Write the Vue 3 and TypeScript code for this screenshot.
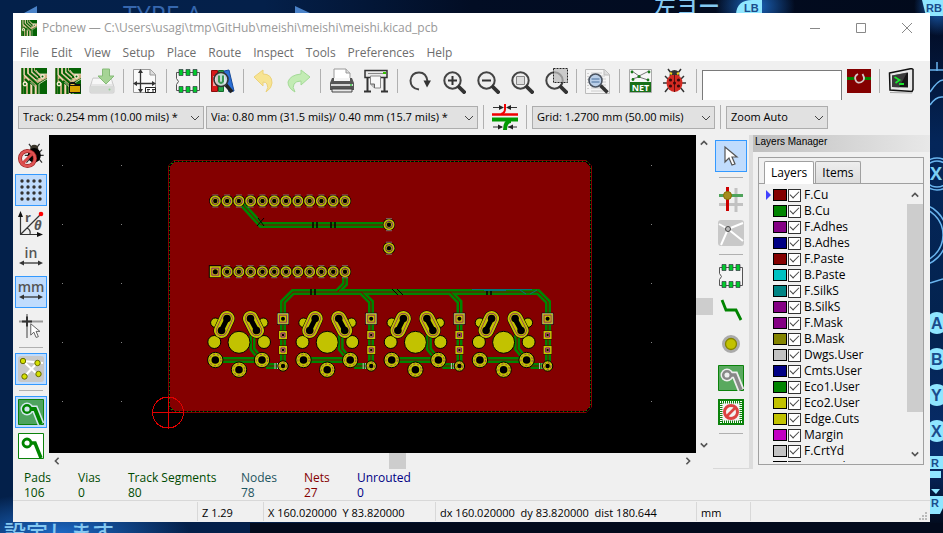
<script setup lang="ts">
import { ref } from 'vue'

interface Layer {
  name: string
  color: string
  visible: boolean
}

const menus = ['File', 'Edit', 'View', 'Setup', 'Place', 'Route', 'Inspect', 'Tools', 'Preferences', 'Help']

const layers = ref<Layer[]>([
  { name: 'F.Cu', color: '#840000', visible: true },
  { name: 'B.Cu', color: '#008400', visible: true },
  { name: 'F.Adhes', color: '#840084', visible: true },
  { name: 'B.Adhes', color: '#000084', visible: true },
  { name: 'F.Paste', color: '#840000', visible: true },
  { name: 'B.Paste', color: '#00c2c2', visible: true },
  { name: 'F.SilkS', color: '#008484', visible: true },
  { name: 'B.SilkS', color: '#840084', visible: true },
  { name: 'F.Mask', color: '#840084', visible: true },
  { name: 'B.Mask', color: '#848400', visible: true },
  { name: 'Dwgs.User', color: '#c2c2c2', visible: true },
  { name: 'Cmts.User', color: '#000084', visible: true },
  { name: 'Eco1.User', color: '#008400', visible: true },
  { name: 'Eco2.User', color: '#c2c200', visible: true },
  { name: 'Edge.Cuts', color: '#c2c200', visible: true },
  { name: 'Margin', color: '#c200c2', visible: true },
  { name: 'F.CrtYd', color: '#c2c2c2', visible: true },
  { name: 'B.CrtYd', color: '#848484', visible: true },
])
const activeLayer = ref('F.Cu')
const filter = ref('')

const stats = [
  { label: 'Pads', value: '106', tone: 'green', width: 54 },
  { label: 'Vias', value: '0', tone: 'green', width: 50 },
  { label: 'Track Segments', value: '80', tone: 'green', width: 113 },
  { label: 'Nodes', value: '78', tone: 'teal', width: 63 },
  { label: 'Nets', value: '27', tone: 'red', width: 53 },
  { label: 'Unrouted', value: '0', tone: 'blue', width: 80 },
]

const pinXs = Array.from({ length: 12 }, (_, i) => 215.3 + i * 11.79)
const pins = [
  ...pinXs.map((x) => ({ x, y: 201 })),
  ...pinXs.slice(1).map((x) => ({ x, y: 271.7 })),
  { x: 389, y: 224.7 },
  { x: 389, y: 248.2 },
]
const keys = [0, 88.2, 176.4, 264.6]
const gridDots = [62, 121, 651].flatMap((x) => [165, 224, 283, 342, 401].map((y) => ({ x, y })))
const ringPads = [
  { x: 215.3, y: 360 },
  { x: 262, y: 360 },
  { x: 239, y: 369.7 },
]
const matrixDots = [0, 1, 2, 3].flatMap((r) => [0, 1, 2, 3].map((c) => ({ x: 4 + c * 6, y: 4 + r * 6 })))
</script>

<template>
  <div class="desktop">
    <svg class="wallpaper" viewBox="0 0 943 533" preserveAspectRatio="none" aria-hidden="true">
      <defs>
        <linearGradient id="night" x1="0" x2="1">
          <stop offset="0" stop-color="#03204a" />
          <stop offset=".28" stop-color="#04204a" />
          <stop offset=".5" stop-color="#020d24" />
          <stop offset="1" stop-color="#020a1c" />
        </linearGradient>
        <linearGradient id="side" x1="0" x2="0" y1="0" y2="1">
          <stop offset="0" stop-color="#020a20" />
          <stop offset=".25" stop-color="#04265a" />
          <stop offset=".6" stop-color="#03234f" />
          <stop offset=".85" stop-color="#082d6c" />
          <stop offset="1" stop-color="#010714" />
        </linearGradient>
        <radialGradient id="glow">
          <stop offset="0" stop-color="#1c68c4" />
          <stop offset="1" stop-color="#1c68c4" stop-opacity="0" />
        </radialGradient>
      </defs>
      <rect width="943" height="533" fill="url(#night)" />
      <rect x="925" y="13" width="18" height="520" fill="url(#side)" />
      <rect y="523" x="250" width="693" height="10" fill="#020a1c" />
      <ellipse cx="60" cy="533" rx="130" ry="40" fill="url(#glow)" />
      <ellipse cx="755" cy="6" rx="40" ry="30" fill="url(#glow)" />
      <ellipse cx="938" cy="6" rx="24" ry="30" fill="url(#glow)" />
      <path d="M37 6v7H24z M295 6v7h15z" fill="#4a82c8" />
      <text x="123" y="24" class="wall-title">TYPE A</text>
      <text x="654" y="14" class="wall-jp">左ヨー</text>
      <text x="-18" y="541" class="wall-jp">し設定します</text>
      <path d="M736 14q1-14 16-14h10v14z M922 0h21v16h-17z" fill="#8fe6ff" />
      <text x="744" y="12" class="wall-pad small">LB</text>
      <text x="926" y="12" class="wall-pad small">RB</text>
      <g fill="none" stroke="#69b4ee" stroke-width="1.5">
        <circle cx="937" cy="174" r="16" />
        <circle cx="937" cy="174" r="13" />
        <circle cx="915" cy="235" r="28" />
        <circle cx="915" cy="235" r="32" />
        <path d="M930 70h13M937 62v9M930 92q8-12 13-12M930 105q6-9 13-8M930 283l13-4" />
      </g>
      <g fill="#8fe6ff">
        <circle cx="937" cy="323" r="11" />
        <circle cx="937" cy="359" r="11" />
        <circle cx="937" cy="395" r="11" />
        <circle cx="937" cy="431" r="11" />
        <path d="M930 456h13v13h-13z M930 471h11v7h-11z M931 489h9l-4 5z M930 496h13v12l-3 6h-10z" />
      </g>
      <text x="930" y="180" font-size="18" font-weight="700" fill="#7bd0f5">X</text>
      <text x="931" y="329" class="wall-pad">A</text>
      <text x="931" y="365" class="wall-pad">B</text>
      <text x="931" y="401" class="wall-pad">Y</text>
      <text x="931" y="437" class="wall-pad">X</text>
      <text x="931" y="467" class="wall-pad small">R</text>
      <text x="931" y="507" class="wall-pad small">R</text>
    </svg>

    <main class="window">
      <header class="titlebar">
        <svg class="app-icon" viewBox="0 0 26 26"><use href="#pcb" /></svg>
        <h1>Pcbnew — C:\Users\usagi\tmp\GitHub\meishi\meishi\meishi.kicad_pcb</h1>
        <div class="window-buttons">
          <button aria-label="Minimize"><svg viewBox="0 0 12 12"><path d="M1 6.500h10" /></svg></button>
          <button aria-label="Maximize"><svg viewBox="0 0 12 12"><path d="M1.500 1.500h9v9h-9z" /></svg></button>
          <button aria-label="Close"><svg viewBox="0 0 12 12"><path d="M1 1l10 10M11 1L1 11" /></svg></button>
        </div>
      </header>

      <nav class="menubar">
        <button v-for="m in menus" :key="m">{{ m }}</button>
      </nav>

      <svg class="defs" aria-hidden="true">
        <defs>
          <g id="pcb">
            <path fill="#d0b183" d="M0 0h26v26H0z" />
            <path fill="#056305" d="M14 0h12v6h-7l-5-4zM17 15l9-5v16h-9z" />
            <g fill="none" stroke="#056305" stroke-width="2.200">
              <path d="M1.500 0v26M5 0v6l12 11v9M9 0v5l8 7M12 0v3l6 6h3M4 17v9M8 26V15L4 11M12.500 26V17L8 13" />
            </g>
            <g fill="none" stroke="#f4ead0" stroke-width=".8">
              <path d="M3 0v7l5 5M7 0v5l8 7h5M11 0v4l6 5M10.500 26V17M14.500 26v-7l-5-5M15 2l3 4h8M18 26V16l8-5" />
            </g>
            <circle cx="21.500" cy="8.500" r="2.400" fill="#f4ead0" /><circle cx="21.500" cy="8.500" r="1" fill="#056305" />
            <circle cx="4" cy="16" r="2.400" fill="#f4ead0" /><circle cx="4" cy="16" r="1" fill="#056305" />
          </g>
          <g id="chip">
            <path d="M1.500 4.500h23v18h-23v-6l2-3-2-3z" fill="#f4f4f4" stroke="#555" />
            <g fill="#00cb2c" stroke="#334" stroke-width=".7">
              <path d="M4 1.500h4v6H4zM11 1.500h4v6h-4zM18 1.500h4v6h-4zM4 18.500h4v6H4zM11 18.500h4v6h-4zM18 18.500h4v6h-4z" />
            </g>
          </g>
          <g id="lens">
            <circle cx="12.500" cy="12.500" r="8.200" fill="#eee" stroke="#444" stroke-width="2" />
            <path d="M19 19l5 5" stroke="#333" stroke-width="3.800" stroke-linecap="square" />
          </g>
          <g id="bug">
            <path d="M6 1l3 4M19 1l-3 4M3 8l4 4M22 8l-4 4M1 15h5M24 15h-5M3 24l4-5M22 24l-4-5" fill="none" stroke="#333" stroke-width="1.500" />
            <path d="M7.500 8q0-6 5-6t5 6z" fill="#3a352a" />
            <ellipse cx="12.500" cy="15" rx="8" ry="9" />
          </g>
          <g id="pointer">
            <path d="M1 1v15l4-4 3 7 3-1-3-7h5z" fill="#fff" stroke="#555" stroke-width="1.200" />
          </g>
        </defs>
      </svg>

      <section class="toolbar main-tools" aria-label="Main tools">
        <button class="tool" aria-label="New board"><svg viewBox="0 0 26 26"><use href="#pcb" /></svg></button>
        <button class="tool" aria-label="Open board">
          <svg viewBox="0 0 26 26">
            <use href="#pcb" />
            <path d="M14 25V15.500l2-1.500h4l1 2h4.500v9z" fill="#111" />
            <path d="M15 24v-6h10v6z" fill="#d9a400" /><path d="M15.500 17v-1h4v1z" fill="#e9c33a" />
          </svg>
        </button>
        <button class="tool" aria-label="Save">
          <svg viewBox="0 0 26 26">
            <path d="M4 10h18l3 9v5q0 1-1 1H2q-1 0-1-1v-5z" fill="#e6e6e6" stroke="#ccc" />
            <path d="M2 18h22v6H2z" fill="#d8dad8" /><path d="M4 11h18l1 5H3z" fill="#f7f7f7" />
            <path d="M13.500 1h7v7H25l-8 8-8-8h4.500z" fill="#a5d495" stroke="#86bb78" /><circle cx="20.500" cy="21.500" r="1" fill="#8ed08e" />
          </svg>
        </button>
        <span class="sep"></span>
        <button class="tool" aria-label="Page settings">
          <svg viewBox="0 0 26 26">
            <path d="M1.500 1.500h17l5 5v18h-22z" fill="#fafafa" stroke="#999" /><path d="M18 1.500V7h5.500" fill="#ddd" stroke="#999" />
            <g stroke="#333" stroke-width="1.300"><path d="M8.500 3v20M3 15.500h19" /></g>
            <path d="M8.500 1l-2.500 4h5zM8.500 25l-2.500-4h5zM1 15.500l4-2.500v5zM24 15.500L20 13v5z" fill="#333" />
            <path d="M13.500 19.500h10v5h-10z" fill="#fff" stroke="#222" /><path d="M15 21.500h3M15 23h2M20 21.500h3M20 23h2" stroke="#333" />
          </svg>
        </button>
        <span class="sep"></span>
        <button class="tool" aria-label="Footprint editor"><svg viewBox="0 0 26 26"><use href="#chip" /></svg></button>
        <button class="tool" aria-label="Footprint viewer">
          <svg viewBox="0 0 26 26">
            <path d="M2.500 2.500h6v21h-6z" fill="#d71919" stroke="#8d0d0d" /><path d="M9.500 2.500h5v21h-5z" fill="#28a44a" stroke="#126b2a" />
            <path d="M15 3l5-1 5 21-5 1z" fill="#2b6fd6" stroke="#174a9a" /><path d="M4 8h3v10H4z" fill="#fff" opacity=".6" />
            <circle cx="12" cy="11.500" r="7" fill="#dce6ea" fill-opacity=".85" stroke="#333" stroke-width="1.600" />
            <path d="M10 7.500v6q2 3 4 0v-6" fill="none" stroke="#3a9a55" stroke-width="2" />
            <path d="M17 17l6 7" stroke="#222" stroke-width="3.600" />
          </svg>
        </button>
        <span class="sep"></span>
        <button class="tool" aria-label="Undo">
          <svg viewBox="0 0 26 26"><path d="M2 9l9-7v4q9 0 9 9 0 5-6 9 3-5 1-8-1-2-4-2v4z" fill="#f7e493" stroke="#ecd27a" /></svg>
        </button>
        <button class="tool" aria-label="Redo">
          <svg viewBox="0 0 26 26"><path d="M24 9l-9-7v4Q4 7 2 14q0 6 7 10-3-5-1-8 2-3 7-3v4z" fill="#c3ecb4" stroke="#a3da96" /></svg>
        </button>
        <span class="sep"></span>
        <button class="tool" aria-label="Print">
          <svg viewBox="0 0 26 26">
            <path d="M5 13V1h12l4 4v8z" fill="#fff" stroke="#999" /><path d="M17 1v4h4" fill="#ddd" stroke="#999" />
            <path d="M3 10h20l2 5v7H1v-7z" fill="#555" /><path d="M5 10h16v3H5z" fill="#f5f5f5" />
            <path d="M2 16h22v2H2z" fill="#d5d5d5" /><path d="M3 21h20v3H3z" fill="#e8e8e8" stroke="#444" /><circle cx="22" cy="17" r="1" fill="#35c23f" />
          </svg>
        </button>
        <button class="tool" aria-label="Plot">
          <svg viewBox="0 0 26 26">
            <path d="M2 2.500h22v7H2z" fill="#e9e9e9" stroke="#333" stroke-width="1.500" /><path d="M5 5.500h15" stroke="#888" /><path d="M20 4h3v2h-3z" fill="#35c200" />
            <path d="M4.500 9v14M21.500 9v14M1 23.500h7M18 23.500h7" stroke="#333" stroke-width="2" />
            <path d="M7.500 8h10v12h-6l-4-4z" fill="#f8f8f8" stroke="#888" /><path d="M7.500 16h4v4" fill="#bbb" stroke="#666" />
          </svg>
        </button>
        <span class="sep"></span>
        <button class="tool" aria-label="Redraw">
          <svg viewBox="0 0 26 26"><path d="M13 21.500q-8.500-1-8.500-9 1-8 8.500-8t8.500 9" fill="none" stroke="#444" stroke-width="2" /><path d="M17.500 12.500h7.500l-4 7z" fill="#333" /></svg>
        </button>
        <button class="tool" aria-label="Zoom in"><svg viewBox="0 0 26 26"><use href="#lens" /><path d="M8 12.500h9M12.500 8v9" stroke="#333" stroke-width="2" /></svg></button>
        <button class="tool" aria-label="Zoom out"><svg viewBox="0 0 26 26"><use href="#lens" /><path d="M8 12.500h9" stroke="#333" stroke-width="2" /></svg></button>
        <button class="tool" aria-label="Zoom to fit"><svg viewBox="0 0 26 26"><use href="#lens" /><path d="M8.500 8.500h8v8h-8z" fill="#ddd" stroke="#888" /></svg></button>
        <button class="tool" aria-label="Zoom to selection">
          <svg viewBox="0 0 26 26"><use href="#lens" /><path d="M11.500.500h14v14h-14z" fill="#bbb" fill-opacity=".7" stroke="#222" stroke-dasharray="2 1" /></svg>
        </button>
        <span class="sep"></span>
        <button class="tool" aria-label="Find">
          <svg viewBox="0 0 26 26">
            <path d="M.5 1.500h19l5 5v19H.5z" fill="#f5f5f5" stroke="#bbb" /><path d="M19 1.500V7h5.500" fill="#ddd" stroke="#bbb" />
            <path d="M6 5h11M6 8h14M6 11h15M6 14h15M6 17h15M6 20h15M6 23h15" stroke="#ccc" /><path d="M3 5v18" stroke="#aaa" stroke-dasharray="1 2" />
            <circle cx="10.500" cy="12.500" r="6.500" fill="#bacfe8" stroke="#4a5360" stroke-width="1.600" /><path d="M6.500 11h8M6.500 14h8" stroke="#6e8fb5" stroke-width="1.500" />
            <path d="M15.500 17.500l7 7" stroke="#333" stroke-width="3.600" />
          </svg>
        </button>
        <span class="sep"></span>
        <button class="tool" aria-label="Netlist">
          <svg viewBox="0 0 26 26">
            <path d="M1.500 1.500h22v23h-22z" fill="#f7f7f7" stroke="#aaa" /><path d="M4 3l7 5 10-5M4 11l7-2 9 3" fill="none" stroke="#777" />
            <g fill="#187818"><circle cx="4" cy="4" r="1.400" /><circle cx="21" cy="4" r="1.400" /><circle cx="11" cy="8.500" r="1.600" /><circle cx="5" cy="11.500" r="1.400" /><circle cx="20" cy="12" r="1.400" /></g>
            <path d="M2 14h21v10H2z" fill="#187018" /><text x="12.500" y="23" class="net-text">NET</text>
          </svg>
        </button>
        <button class="tool" aria-label="Design rules check">
          <svg viewBox="0 0 26 26">
            <use href="#bug" fill="#d32a22" /><path d="M8 7q0-4 4.500-4T17 7z" fill="#333" /><path d="M8 5l2 1M17 5l-2 1" stroke="#f2d21c" stroke-width="2" /><path d="M12.500 7v17" stroke="#611" />
            <g fill="#3a0a0a"><circle cx="8.500" cy="12" r="1.600" /><circle cx="16.500" cy="12" r="1.600" /><circle cx="8.500" cy="18" r="1.600" /><circle cx="16.500" cy="18" r="1.600" /><circle cx="12.500" cy="15" r="1.500" /></g>
          </svg>
        </button>
        <span class="sep"></span>
        <input v-model="filter" class="filter" aria-label="Layer selection" />
        <button class="tool layer-pair" aria-label="Select layer pair">
          <svg viewBox="0 0 26 26"><path d="M1 1h24v24H1z" fill="#840000" /><path d="M1 10.500h24" stroke="#008400" stroke-width="3" /><circle cx="13" cy="10.500" r="5" fill="#840000" /><path d="M12 6q-4 2-2.500 6t6 2 1-8" fill="none" stroke="#d5c9c9" stroke-width="1.800" /></svg>
        </button>
        <span class="sep"></span>
        <button class="tool" aria-label="Scripting console">
          <svg viewBox="0 0 26 26">
            <path d="M1.500 5l22-4.500 1.500 1v20l-1 2L2 22z" fill="#e8e8e8" stroke="#111" stroke-width="1.500" /><path d="M4 7.500L20 4.500v15L4 19z" fill="#161616" />
            <path d="M4 7.500l15-3-8 15-7-.5z" fill="#555" opacity=".6" /><path d="M6.500 9l5 3-4 3M11 16h5" fill="none" stroke="#19e52c" stroke-width="1.800" /><path d="M2 24.500l22 .5" stroke="#aaa" />
          </svg>
        </button>
      </section>

      <section class="toolbar option-tools" aria-label="Options">
        <label class="choice track"><select aria-label="Track width"><option>Track: 0.254 mm (10.00 mils) *</option></select><svg viewBox="0 0 10 6"><path d="M1 1l4 4 4-4" /></svg></label>
        <label class="choice via"><select aria-label="Via size"><option>Via: 0.80 mm (31.5 mils)/ 0.40 mm (15.7 mils) *</option></select><svg viewBox="0 0 10 6"><path d="M1 1l4 4 4-4" /></svg></label>
        <span class="sep"></span>
        <button class="tool" aria-label="Automatic track width">
          <svg viewBox="0 0 26 26">
            <path d="M0 10.500h26" stroke="#f00000" stroke-width="2.500" /><path d="M0 15.500h26" stroke="#009a00" stroke-width="4" />
            <path d="M13 0v5q0 4-4 5" fill="none" stroke="#f00000" stroke-width="2" /><path d="M19 17q-6 0-6 9" fill="none" stroke="#009a00" stroke-width="4" />
            <path d="M1 3.500h9M25 3.500h-9M1 23h9M25 23h-9" stroke="#333" /><path d="M7 1l5 2.500L7 6zM19 1l-5 2.500L19 6zM6 20.500l5 2.500-5 2.500zM21 20.500L16 23l5 2.500z" fill="#222" />
          </svg>
        </button>
        <span class="sep"></span>
        <label class="choice grid"><select aria-label="Grid"><option>Grid: 1.2700 mm (50.00 mils)</option></select><svg viewBox="0 0 10 6"><path d="M1 1l4 4 4-4" /></svg></label>
        <span class="sep"></span>
        <label class="choice zoom"><select aria-label="Zoom"><option>Zoom Auto</option></select><svg viewBox="0 0 10 6"><path d="M1 1l4 4 4-4" /></svg></label>
      </section>

      <div class="workspace">
        <aside class="side-tools left-tools" aria-label="Display options">
          <button class="tool" aria-label="Disable DRC">
            <svg viewBox="0 0 26 26"><g transform="translate(6 0) scale(.82)"><use href="#bug" fill="#000" /></g><circle cx="9.500" cy="15.500" r="7.500" fill="none" stroke="#9a2020" stroke-width="4" /><circle cx="9.500" cy="15.500" r="7.500" fill="none" stroke="#e05555" stroke-width="2.600" /><path d="M4.500 20.500l10-10" stroke="#d94848" stroke-width="3" /></svg>
          </button>
          <button class="tool on" aria-label="Show grid">
            <svg viewBox="0 0 26 26"><circle v-for="(d, i) in matrixDots" :key="i" :cx="d.x" :cy="d.y" r="1.700" fill="#333" /></svg>
          </button>
          <button class="tool" aria-label="Polar coordinates">
            <svg viewBox="0 0 26 26"><path d="M2.500 23.500V4M2 23.500h20M3 23L22 4M9 17q4 2 3 6" fill="none" stroke="#333" stroke-width="1.200" /><path d="M2.500 0L0 6h5zM25 23.500L19 21v5z" fill="#111" /><circle cx="23" cy="3" r="2.300" fill="#f00" /><text x="7" y="11" class="glyph">r</text><text x="16" y="19" class="glyph theta">θ</text></svg>
          </button>
          <button class="tool" aria-label="Inches"><svg viewBox="0 0 26 26"><text x="13" y="13" class="unit">in</text><path d="M4 18h18" stroke="#333" stroke-width="1.300" /><path d="M1 18l5-2.500v5zM25 18l-5-2.500v5z" fill="#333" /></svg></button>
          <button class="tool on" aria-label="Millimeters"><svg viewBox="0 0 26 26"><text x="13" y="13" class="unit">mm</text><path d="M4 18h18" stroke="#333" stroke-width="1.300" /><path d="M1 18l5-2.500v5zM25 18l-5-2.500v5z" fill="#333" /></svg></button>
          <button class="tool" aria-label="Cursor shape">
            <svg viewBox="0 0 26 26"><path d="M9 1v24M1 8.500h24" stroke="#999" stroke-width="2" /><path d="M9 3.500v10M4 8.500h10" stroke="#333" stroke-width="2" /><g transform="translate(12 10) scale(.76)"><use href="#pointer" /></g></svg>
          </button>
          <span class="sep"></span>
          <button class="tool on" aria-label="Ratsnest">
            <svg viewBox="0 0 26 26"><rect width="26" height="26" rx="3" fill="#c8c8c8" /><path d="M5 5l15 14M6 21L19 7M5 5l20 2" stroke="#fff" stroke-width="2.200" /><g fill="#d5e000" stroke="#666b00"><circle cx="5" cy="5" r="2.700" /><circle cx="19.500" cy="7" r="2.700" /><circle cx="6.500" cy="20.500" r="2.700" /><circle cx="20.500" cy="18" r="2.700" /></g></svg>
          </button>
          <span class="sep"></span>
          <button class="tool on" aria-label="Filled zones">
            <svg viewBox="0 0 26 26"><path d="M.5.5h25v25H.5z" fill="#4ea35f" stroke="#0b820b" /><path d="M9 10h8l6 15" fill="none" stroke="#d3e7ee" stroke-width="7" /><circle cx="9" cy="10" r="6.500" fill="#d3e7ee" /><path d="M9 10h8l6 15" fill="none" stroke="#008400" stroke-width="3.800" /><circle cx="9" cy="10" r="3.800" fill="#d3e7ee" stroke="#008400" stroke-width="2.400" /></svg>
          </button>
          <button class="tool" aria-label="Outline zones">
            <svg viewBox="0 0 26 26"><path d="M.5.5h25v25H.5z" fill="#fff" stroke="#0b820b" /><path d="M12 10h5l6 15" fill="none" stroke="#008400" stroke-width="3.400" /><circle cx="9" cy="10" r="4" fill="#fff" stroke="#008400" stroke-width="2.800" /></svg>
          </button>
        </aside>

        <div class="view">
          <div class="view-row">
            <svg class="board" viewBox="49 135 647 318" role="img" aria-label="Board">
              <rect v-for="(d, i) in gridDots" :key="'g' + i" :x="d.x" :y="d.y" width="1" height="1" fill="#848484" />
              <path d="M174 160H586L592 166V407L586 413H174L168 407V166z" fill="#840000" />
              <path d="M174 161.500H586L590.500 166V407L586 411.500H174L169.500 407V166z" fill="none" stroke="#000" shape-rendering="crispEdges" />
              <path d="M174 161.500H586L590.500 166V407L586 411.500H174L169.500 407V166z" fill="none" stroke="#008400" stroke-dasharray="1 3" shape-rendering="crispEdges" />

              <g v-for="pass in ['wide', 'core']" :key="pass" :class="['trace', pass]">
                <path d="M241 203l20 22h123M345 275v9l-8 8M283 368v-66l10-10h245l10 10v64" />
                <path d="M361 292l10 10v64M450 292l9.500 10v64" />
                <g v-for="k in keys" :key="k" :transform="`translate(${k} 0)`">
                  <path d="M221 360h34M252.500 335v14l8 10M266 366h14" />
                </g>
              </g>
              <g stroke="#000" stroke-width="1.500">
                <path d="M313 222v6M317 222v6M331 222v6M335 222v6M311 289v6M315 289v6M487 291v4M491 291v4" />
                <path d="M258 218l6 8M264 218l-7 8M392 289l6 6M397 289l6 6" stroke-width="1" />
              </g>
              <path d="M472 289.500h60M484 290.500h22M520 290l6 4M530 294l7-4" stroke="#007878" />

              <g v-for="(p, i) in pins" :key="'p' + i" :transform="`translate(${p.x} ${p.y})`">
                <circle r="6.200" fill="#000" />
                <path d="M-3-6h6M-3 6h6" stroke="#848484" stroke-width=".8" />
                <circle r="5.500" fill="#c2c200" />
                <circle r="3.500" fill="none" stroke="#3c0a3c" stroke-width=".8" /><circle r="3.700" fill="none" stroke="#a03aa0" stroke-width=".8" stroke-dasharray="2 3" />
                <circle r="2.200" fill="#000" />
              </g>
              <g transform="translate(215.300 271.700)">
                <path d="M-6.500-6.500H6V6H-6.500z" fill="#000" /><path d="M-5.500-5.500H5.500V5.500H-5.500z" fill="#c2c200" /><path d="M-3.500-3.500h7v7h-7z" fill="none" stroke="#840084" stroke-width=".8" /><circle r="2.500" />
              </g>

              <g v-for="k in keys" :key="'k' + k" :transform="`translate(${k} 0)`">
                <g fill="#c2c200" stroke="#000">
                  <circle cx="215.300" cy="322.700" r="4.700" /><circle cx="263.300" cy="322.700" r="4.700" />
                  <circle cx="239" cy="342.300" r="11" /><circle cx="214.300" cy="342" r="6.500" /><circle cx="264" cy="342" r="6.500" />
                </g>
                <g fill="none" stroke-linecap="round">
                  <path class="slot-edge" d="M227 318.500l-5.500 12M250.500 318.500l6 12" />
                  <path class="slot-pad" d="M227 318.500l-5.500 12M250.500 318.500l6 12" />
                  <path class="slot-mask" d="M227 318.500l-5.500 12M250.500 318.500l6 12" />
                  <path class="slot-ring" d="M227 318.500l-5.500 12M250.500 318.500l6 12" />
                  <path class="slot-hole" d="M227 319l-5.500 11M250.500 319l6 11" />
                </g>
                <g fill="#000"><circle cx="227" cy="318.500" r="3.800" /><circle cx="221.500" cy="330.500" r="3.800" /><circle cx="250.500" cy="318.500" r="3.800" /><circle cx="256.500" cy="330.500" r="3.800" /></g>
                <g v-for="(p, i) in ringPads" :key="i" :transform="`translate(${p.x} ${p.y})`">
                  <circle r="7.700" fill="#c2c200" stroke="#000" /><circle r="5.700" fill="none" stroke="#840084" stroke-width=".7" stroke-dasharray="2 2" /><circle r="3.800" fill="#000" />
                </g>
                <g transform="translate(283 318.700)"><path d="M-6-6H6V6H-6z" fill="#000" /><path d="M-5.200-5.200H5.200V5.200H-5.200z" fill="#c2c200" stroke="#c2c2c2" stroke-width=".5" /><path d="M-3.500-3.500h7v7h-7z" fill="none" stroke="#840084" stroke-width=".7" /><circle r="2" fill="#000" /></g>
                <g v-for="y in [335, 350]" :key="y" :transform="`translate(283 ${y})`"><path d="M-4.500-4.500h9v9h-9z" fill="#420000" /><path d="M-4-4h8v8h-8z" fill="#c2c200" /><path d="M-2-2h4v4h-4z" fill="#c2c200" stroke="#840084" /><path d="M-1-1h2v2h-2z" /></g>
                <path d="M275 363v6M277.500 363v6" stroke="#c2c2c2" />
                <g transform="translate(283 366)"><circle r="5.200" fill="#c2c200" stroke="#000" /><circle r="3.400" fill="none" stroke="#840084" stroke-width=".7" stroke-dasharray="2 2" /><circle r="2.200" /></g>
              </g>
              <g fill="none" stroke="#e00000" shape-rendering="crispEdges"><circle cx="168" cy="412.500" r="15.500" /><path d="M152 412.500h32M168.500 396v33" /></g>
            </svg>
            <div class="scroll vertical">
              <button aria-label="Scroll up"><svg viewBox="0 0 10 6"><path d="M1 5l4-4 4 4" /></svg></button>
              <span class="thumb"></span>
              <button aria-label="Scroll down"><svg viewBox="0 0 10 6"><path d="M1 1l4 4 4-4" /></svg></button>
            </div>
          </div>
          <div class="scroll horizontal">
            <button aria-label="Scroll left"><svg viewBox="0 0 6 10"><path d="M5 1L1 5l4 4" /></svg></button>
            <span class="thumb"></span>
            <button aria-label="Scroll right"><svg viewBox="0 0 6 10"><path d="M1 1l4 4-4 4" /></svg></button>
          </div>
        </div>

        <aside class="side-tools right-tools" aria-label="Drawing tools">
          <button class="tool on" aria-label="Select"><svg viewBox="0 0 26 26"><g transform="translate(6 3)"><use href="#pointer" /></g></svg></button>
          <span class="sep"></span>
          <button class="tool" aria-label="Highlight net">
            <svg viewBox="0 0 26 26"><path d="M18 2v24M1 18.500h24" stroke="#c2c2c2" stroke-width="3" /><path d="M9.500 1v24" stroke="#cc0000" stroke-width="3" /><path d="M1 9.500h24" stroke="#4ea35a" stroke-width="3" /><circle cx="9.500" cy="9.500" r="4" fill="#a58d1c" stroke="#857000" /></svg>
          </button>
          <button class="tool" aria-label="Local ratsnest">
            <svg viewBox="0 0 26 26"><rect width="26" height="26" rx="3" fill="#c8c8c8" /><path d="M10 9L1 4M10 9l15-6M10 9l15 12M10 9L3 25" stroke="#fff" stroke-width="2" /><circle cx="10" cy="9" r="2.500" fill="#bbb" stroke="#444" /></svg>
          </button>
          <span class="sep"></span>
          <button class="tool" aria-label="Add footprint"><svg viewBox="0 0 26 26"><use href="#chip" /></svg></button>
          <button class="tool" aria-label="Route track"><svg viewBox="0 0 26 26"><path d="M4 3l4 10h10l5 10" fill="none" stroke="#008400" stroke-width="2.800" /></svg></button>
          <button class="tool" aria-label="Add via"><svg viewBox="0 0 26 26"><circle cx="13" cy="13" r="7.500" fill="#aaa28b" stroke="#aaa" stroke-width="3" /><circle cx="13" cy="13" r="5.500" fill="#c2c200" stroke="#848400" stroke-width="1.300" /></svg></button>
          <button class="tool" aria-label="Add zone">
            <svg viewBox="0 0 26 26"><path d="M.5.5h25v25H.5z" fill="#59a95f" stroke="#0b820b" /><path d="M9 10h8l6 15" fill="none" stroke="#eee" stroke-width="7" /><circle cx="9" cy="10" r="6.500" fill="#eee" /><path d="M9 10h8l6 15" fill="none" stroke="#888" stroke-width="3.400" /><circle cx="9" cy="10" r="3.800" fill="#eee" stroke="#888" stroke-width="2.500" /></svg>
          </button>
          <button class="tool" aria-label="Add keepout">
            <svg viewBox="0 0 26 26"><path d="M1 1h24v24H1z" fill="#fff" stroke="#0b820b" stroke-width="2" /><path d="M3 3h20v20H3z" fill="#f2f2f2" stroke="#0b820b" stroke-width="3" stroke-dasharray="1 1" /><circle cx="13" cy="13" r="6.500" fill="#f2f2f2" stroke="#dc4242" stroke-width="3" /><path d="M8.500 17.500l9-9" stroke="#dc4242" stroke-width="2.600" /></svg>
          </button>
          <span class="sep"></span>
        </aside>

        <aside class="layers-pane">
          <h2>Layers Manager</h2>
          <div class="tab-box">
            <div class="tabs" role="tablist">
              <button role="tab" class="tab current">Layers</button>
              <button role="tab" class="tab">Items</button>
            </div>
            <div class="tab-body">
              <ul>
                <li v-for="l in layers" :key="l.name">
                  <span class="marker"><svg v-if="l.name === activeLayer" viewBox="0 0 5 10"><path d="M0 0l5 5-5 5z" /></svg></span>
                  <span class="swatch" :style="{ background: l.color }"></span>
                  <label><input v-model="l.visible" type="checkbox" />{{ l.name }}</label>
                </li>
              </ul>
              <div class="scroll vertical list-scroll">
                <button aria-label="Scroll layers up"><svg viewBox="0 0 10 6"><path d="M1 5l4-4 4 4" /></svg></button>
                <span class="thumb"></span>
                <button aria-label="Scroll layers down"><svg viewBox="0 0 10 6"><path d="M1 1l4 4 4-4" /></svg></button>
              </div>
            </div>
          </div>
        </aside>
      </div>

      <dl class="stats">
        <div v-for="s in stats" :key="s.label" :class="s.tone" :style="{ width: s.width + 'px' }">
          <dt>{{ s.label }}</dt>
          <dd>{{ s.value }}</dd>
        </div>
      </dl>

      <footer class="status">
        <span class="message"></span>
        <span class="zoom-level">Z 1.29</span>
        <span class="position">X 160.020000&nbsp; Y 83.820000</span>
        <span class="delta">dx 160.020000&nbsp; dy 83.820000&nbsp; dist 180.644</span>
        <span class="units">mm</span>
        <span class="rest"></span>
        <svg class="grip" viewBox="0 0 9 9"><path d="M6 0h2v2H6zM3 3h2v2H3zM6 3h2v2H6zM0 6h2v2H0zM3 6h2v2H3zM6 6h2v2H6z" /></svg>
      </footer>
    </main>
  </div>
</template>

<style>
body {
  background: #020d24;
}
</style>

<style scoped>
* {
  box-sizing: border-box;
}
.desktop {
  position: relative;
  display: flex;
  height: 100vh;
  padding: 13px 13px 11px;
  font-family: 'Open Sans', 'Noto Sans CJK JP', sans-serif;
  font-size: 12px;
  line-height: 16px;
  color: #000;
}
.wallpaper {
  position: absolute;
  inset: 0;
  width: 100%;
  height: 100%;
}
.wall-title {
  font-size: 25px;
  fill: #3667ae;
}
.wall-jp {
  font-family: 'Noto Sans CJK JP', sans-serif;
  font-size: 22px;
  font-weight: 500;
  fill: #85c9f2;
}
.wall-pad {
  font-family: 'Liberation Sans', sans-serif;
  font-weight: 700;
  font-size: 16px;
  fill: #1a4c8c;
}
.small {
  font-size: 11px;
}
.window {
  position: relative;
  flex: 1;
  min-width: 0;
  display: flex;
  flex-direction: column;
  background: #f0f0f0;
}
.defs {
  position: absolute;
  width: 0;
  height: 0;
}
button {
  font: inherit;
  color: inherit;
  background: none;
  border: 0;
  padding: 0;
}
svg {
  display: block;
}
.titlebar {
  display: flex;
  align-items: center;
  height: 30px;
  padding-left: 8px;
  background: #fff;
}
.app-icon {
  width: 16px;
  height: 16px;
  margin-right: 5px;
}
h1 {
  flex: 1;
  margin: 0;
  font-size: 12px;
  font-weight: 400;
  color: #999;
  white-space: nowrap;
}
.window-buttons {
  display: flex;
}
.window-buttons button {
  width: 46px;
  height: 28px;
  display: grid;
  place-items: center;
}
.window-buttons svg {
  width: 12px;
  height: 12px;
  fill: none;
  stroke: #888;
}
.menubar {
  display: flex;
  gap: 12px;
  height: 18px;
  padding: 2px 0 0 7px;
  background: #fff;
  color: #6d6d6d;
}
.menubar button {
  height: 16px;
}
.toolbar {
  display: flex;
  align-items: center;
}
.main-tools {
  height: 40px;
  padding-left: 4px;
}
.option-tools {
  height: 34px;
  padding: 0 0 2px 5px;
}
.tool {
  width: 34px;
  height: 34px;
  flex: none;
  display: grid;
  place-items: center;
}
.tool svg {
  width: 26px;
  height: 26px;
}
.toolbar .sep {
  width: 9px;
  height: 24px;
  flex: none;
  background: linear-gradient(#b0b0b0, #b0b0b0) 4px 0 / 1px 100% no-repeat;
}
.option-tools .sep {
  width: 11px;
  background-position: 5px 0;
}
.option-tools .tool {
  width: 32px;
}
.filter {
  width: 140px;
  height: 30px;
  margin: 7px 0 0 1px;
  border: 1px solid #7a7a7a;
  border-bottom: 0;
  background: #fff;
}
.layer-pair {
  margin-right: -1px;
}
.net-text {
  font-size: 9px;
  font-weight: 700;
  fill: #fff;
  text-anchor: middle;
}
.choice {
  position: relative;
  flex: none;
}
.choice select {
  appearance: none;
  width: 100%;
  height: 23px;
  padding: 0 16px 0 4px;
  border: 1px solid #adadad;
  border-radius: 0;
  background: #e1e1e1;
  font: inherit;
  font-size: 11px;
  color: #000;
  display: block;
}
.choice svg {
  position: absolute;
  right: 4px;
  top: 9px;
  width: 10px;
  height: 6px;
  fill: none;
  stroke: #444;
}
.track {
  width: 186px;
  margin-right: 2px;
}
.via {
  width: 272px;
}
.grid {
  width: 183px;
}
.zoom {
  width: 102px;
}
.workspace {
  flex: 1;
  min-height: 0;
  display: flex;
}
.side-tools {
  flex: none;
  width: 36px;
  padding: 4px 1px 0;
  overflow: hidden;
}
.side-tools .sep {
  display: block;
  width: 24px;
  height: 9px;
  margin: 0 auto;
  background: linear-gradient(#b0b0b0, #b0b0b0) 0 4px / 100% 1px no-repeat;
}
.side-tools .on {
  background: #c0dcfd;
  border: 1px solid #3399ff;
  width: 32px;
  height: 32px;
  margin: 1px;
}
.glyph {
  font-size: 13px;
  font-weight: 700;
  fill: #555;
}
.theta {
  font-style: italic;
}
.unit {
  font-size: 14px;
  font-weight: 600;
  fill: #555;
  text-anchor: middle;
}
.right-tools {
  border-bottom: 1px solid #d8d8d8;
}
.view {
  flex: 1;
  min-width: 0;
  display: flex;
  flex-direction: column;
}
.view-row {
  flex: 1;
  min-height: 0;
  display: flex;
}
.board {
  flex: 1;
  min-width: 0;
  height: 100%;
  background: #000;
}
.trace {
  fill: none;
}
.wide {
  stroke: #008400;
  stroke-width: 6px;
}
.core {
  stroke: #840000;
  stroke-width: 1px;
}
.slot-edge {
  stroke: #000;
  stroke-width: 16px;
}
.slot-pad {
  stroke: #c2c200;
  stroke-width: 15px;
}
.slot-mask {
  stroke: #840084;
  stroke-width: 11px;
}
.slot-ring {
  stroke: #c2c200;
  stroke-width: 10px;
}
.slot-hole {
  stroke: #000;
  stroke-width: 5px;
}
.scroll {
  flex: none;
  display: flex;
}
.scroll svg {
  fill: none;
  stroke: #555;
  stroke-width: 2px;
}
.scroll button {
  width: 16px;
  height: 16px;
  flex: none;
  display: grid;
  place-items: center;
}
.vertical {
  width: 16px;
  flex-direction: column;
  justify-content: space-between;
}
.view-row .vertical {
  width: 17px;
}
.vertical svg {
  width: 8px;
  height: 6px;
}
.vertical .thumb {
  height: 17px;
  margin-top: 24px;
  background: #cdcdcd;
}
.horizontal {
  height: 16px;
  margin-right: 17px;
  justify-content: space-between;
}
.horizontal svg {
  width: 6px;
  height: 8px;
}
.horizontal .thumb {
  width: 17px;
  margin-left: 50px;
  background: #cdcdcd;
}
.layers-pane {
  flex: none;
  width: 181px;
  border-left: 4px solid #dcdcdc;
  display: flex;
  flex-direction: column;
  padding-bottom: 4px;
}
h2 {
  flex: none;
  margin: 0 0 5px;
  height: 17px;
  padding-left: 2px;
  font: 10px/14px 'Liberation Sans', sans-serif;
  background: linear-gradient(90deg, #bfbfbf, #e8e8e8);
}
.tab-box {
  flex: 1;
  min-height: 0;
  margin: 0 6px 0 5px;
  border: 1px solid #a0a0a0;
  display: flex;
  flex-direction: column;
  padding-bottom: 2px;
}
.tabs {
  flex: none;
  display: flex;
  gap: 1px;
  height: 26px;
  padding: 3px 5px 0;
  border-bottom: 1px solid #a0a0a0;
}
.tab {
  padding: 0 6px;
  height: 22px;
  border: 1px solid #a0a0a0;
  border-bottom: 0;
  border-radius: 2px 2px 0 0;
  background: linear-gradient(#eee, #dcdcdc);
}
.current {
  background: #fff;
  height: 23px;
}
.tab-body {
  flex: 1;
  min-height: 0;
  display: flex;
  padding-top: 3px;
}
ul {
  flex: 1;
  margin: 0;
  padding: 0 0 0 9px;
  list-style: none;
  overflow: hidden;
}
li {
  display: flex;
  align-items: center;
  height: 16px;
}
.marker {
  width: 5px;
}
.marker svg {
  width: 5px;
  height: 10px;
  margin-left: -2px;
  fill: #4040ff;
}
.swatch {
  width: 14px;
  height: 12px;
  border: 1px solid #000;
}
li label {
  display: flex;
  align-items: center;
  gap: 3px;
  margin-left: 1px;
}
li input {
  appearance: none;
  width: 13px;
  height: 13px;
  margin: 0;
  border: 1px solid #333;
  background: #fff;
  display: grid;
  place-items: center;
}
li input:checked::after {
  content: '';
  width: 8px;
  height: 4px;
  margin-top: -3px;
  border: solid #444;
  border-width: 0 0 1px 1px;
  transform: rotate(-45deg);
}
.list-scroll .thumb {
  flex: 1;
  margin: 1px 0 34px;
}
.stats {
  flex: none;
  display: flex;
  margin: 0;
  height: 32px;
  padding: 1px 0 0 11px;
  border-bottom: 1px solid #d8d8d8;
  line-height: 15px;
  white-space: nowrap;
}
.stats dd {
  margin: 0;
}
.green {
  color: #004a00;
}
.teal {
  color: #1f5560;
}
.red {
  color: #840000;
}
.blue {
  color: #000084;
}
.status {
  flex: none;
  display: flex;
  align-items: stretch;
  height: 21px;
  padding: 1px 2px 1px 0;
  font-size: 11px;
  line-height: 21px;
  white-space: nowrap;
}
.status span {
  border-right: 1px solid #d8d8d8;
  padding-left: 4px;
}
.status .rest {
  flex: 1;
  border: 0;
}
.message {
  width: 185px;
}
.zoom-level {
  width: 66px;
}
.position {
  width: 172px;
}
.delta {
  width: 261px;
}
.units {
  width: 54px;
}
.grip {
  width: 9px;
  height: 9px;
  align-self: flex-end;
  fill: #bbb;
}
</style>
